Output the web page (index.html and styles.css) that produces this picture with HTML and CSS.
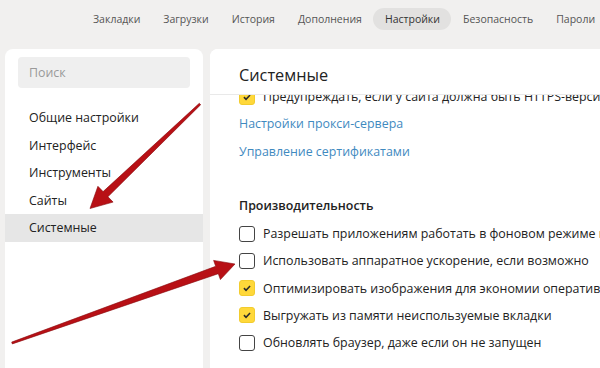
FILE: index.html
```html
<!DOCTYPE html>
<html lang="ru">
<head>
<meta charset="utf-8">
<title>Настройки</title>
<link rel="stylesheet" href="styles.css">
</head>
<body>
<nav class="topnav">
  <span class="nav-item">Закладки</span>
  <span class="nav-item">Загрузки</span>
  <span class="nav-item">История</span>
  <span class="nav-item">Дополнения</span>
  <span class="nav-item active">Настройки</span>
  <span class="nav-item">Безопасность</span>
  <span class="nav-item">Пароли</span>
</nav>
<div class="main">
  <aside class="sidebar">
    <div class="search">Поиск</div>
    <ul class="menu">
      <li>Общие настройки</li>
      <li>Интерфейс</li>
      <li>Инструменты</li>
      <li>Сайты</li>
      <li class="selected">Системные</li>
    </ul>
  </aside>
  <section class="content">
    <header class="content-head">Системные</header>
    <div class="scroll">
      <div class="scroll-inner">
        <div class="row"><span class="cb checked"><svg viewBox="0 0 16 16"><path d="M4.5 8.2l2.4 2.4 4.6-4.8" fill="none" stroke="#2b2b2b" stroke-width="1.8"/></svg></span>Предупреждать, если у сайта должна быть HTTPS-версия</div>
        <div class="row link">Настройки прокси-сервера</div>
        <div class="row link">Управление сертификатами</div>
        <div class="section-title">Производительность</div>
        <div class="row"><span class="cb"></span>Разрешать приложениям работать в фоновом режиме после закрытия браузера</div>
        <div class="row"><span class="cb"></span>Использовать аппаратное ускорение, если возможно</div>
        <div class="row"><span class="cb checked"><svg viewBox="0 0 16 16"><path d="M4.5 8.2l2.4 2.4 4.6-4.8" fill="none" stroke="#2b2b2b" stroke-width="1.8"/></svg></span>Оптимизировать изображения для экономии оперативной памяти</div>
        <div class="row"><span class="cb checked"><svg viewBox="0 0 16 16"><path d="M4.5 8.2l2.4 2.4 4.6-4.8" fill="none" stroke="#2b2b2b" stroke-width="1.8"/></svg></span>Выгружать из памяти неиспользуемые вкладки</div>
        <div class="row"><span class="cb"></span>Обновлять браузер, даже если он не запущен</div>
      </div>
    </div>
  </section>
</div>
<svg class="arrows" viewBox="0 0 600 368" width="600" height="368">
  <polygon points="200.7,104.7 107.9,196.8 113.1,202.1 90,208.5 97.9,186.3 103.1,191.6 199.3,103.3"/>
  <polygon points="12.3,343.9 218.3,273.7 220.4,279.6 235,264 213.6,260.4 215.7,266.3 11.7,342.1"/>
</svg>
</body>
</html>
```
FILE: styles.css
```css
* { box-sizing: border-box; }
html, body { margin: 0; padding: 0; }
body {
  width: 600px;
  height: 368px;
  overflow: hidden;
  background: #f1f0ef;
  font-family: "Open Sans", "Noto Sans", sans-serif;
  color: #222;
  position: relative;
}
.topnav {
  display: flex;
  align-items: center;
  height: 49px;
  padding: 0 0 11px 81.5px;
  white-space: nowrap;
}
.nav-item {
  font-size: 10.5px;
  color: #555;
  padding: 0 11.5px;
  height: 22px;
  line-height: 22px;
  border-radius: 11px;
}
.nav-item.active {
  background: #e2e1e0;
  color: #333;
}
.main {
  display: flex;
  gap: 7px;
  padding-left: 5px;
  width: 640px;
  height: 319px;
}
.sidebar {
  width: 198px;
  flex: none;
  background: #fff;
  border-radius: 8px 8px 0 0;
  padding-top: 8px;
}
.search {
  margin: 0 13px;
  height: 31px;
  background: #efefef;
  border-radius: 4px;
  padding-left: 11px;
  font-size: 12.4px;
  line-height: 31px;
  color: #9a9a9a;
}
.menu {
  list-style: none;
  margin: 16px 0 0;
  padding: 0;
}
.menu li {
  height: 27.5px;
  line-height: 27.5px;
  padding-left: 24px;
  font-size: 12.4px;
  color: #222;
}
.menu li.selected {
  background: #e6e6e6;
}
.content {
  flex: 1;
  background: #fff;
  border-radius: 8px 8px 0 0;
  display: flex;
  flex-direction: column;
  overflow: hidden;
}
.content-head {
  height: 46px;
  padding: 14px 0 0 29px;
  font-size: 16.3px;
  line-height: 24px;
  color: #222;
  border-bottom: 1px solid #e9e9e9;
  flex: none;
  position: relative;
  z-index: 1;
  background: #fff;
}
.scroll {
  flex: 1;
  overflow: hidden;
}
.scroll-inner {
  margin-top: -12px;
  padding-left: 29px;
}
.row {
  display: flex;
  align-items: center;
  height: 27.3px;
  font-size: 12.4px;
  color: #222;
  white-space: nowrap;
}
.row.link {
  color: #3f8abf;
}
.section-title {
  margin-top: 27px;
  height: 28px;
  line-height: 28px;
  font-size: 12.4px;
  font-weight: 600;
  color: #222;
}
.cb {
  width: 16px;
  height: 16px;
  border: 1.5px solid #444;
  border-radius: 3px;
  margin-right: 8px;
  flex: none;
  display: flex;
}
.cb.checked {
  background: #ffd83a;
  border-color: #f2cc2e;
}
.cb svg {
  width: 100%;
  height: 100%;
}
.arrows {
  position: absolute;
  left: 0;
  top: 0;
  pointer-events: none;
}
.arrows polygon {
  fill: #b81015;
  stroke: #870a0d;
  stroke-width: 0.6;
  stroke-linejoin: round;
}
```
